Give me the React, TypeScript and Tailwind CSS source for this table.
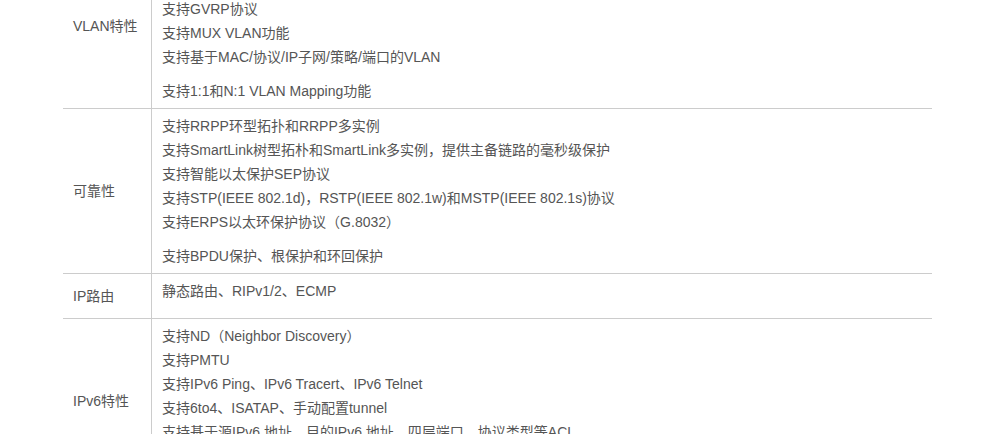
type Row = {
  label: string;
  lines: string[];
  tail?: string;
  padEnd?: boolean;
};

const rows: Row[] = [
  {
    label: "VLAN特性",
    lines: [
      "支持4K个VLAN",
      "支持Guest VLAN、Voice VLAN",
      "支持GVRP协议",
      "支持MUX VLAN功能",
      "支持基于MAC/协议/IP子网/策略/端口的VLAN",
    ],
    tail: "支持1:1和N:1 VLAN Mapping功能",
  },
  {
    label: "可靠性",
    lines: [
      "支持RRPP环型拓扑和RRPP多实例",
      "支持SmartLink树型拓朴和SmartLink多实例，提供主备链路的毫秒级保护",
      "支持智能以太保护SEP协议",
      "支持STP(IEEE 802.1d)，RSTP(IEEE 802.1w)和MSTP(IEEE 802.1s)协议",
      "支持ERPS以太环保护协议（G.8032）",
    ],
    tail: "支持BPDU保护、根保护和环回保护",
  },
  {
    label: "IP路由",
    lines: ["静态路由、RIPv1/2、ECMP"],
    padEnd: true,
  },
  {
    label: "IPv6特性",
    lines: [
      "支持ND（Neighbor Discovery）",
      "支持PMTU",
      "支持IPv6 Ping、IPv6 Tracert、IPv6 Telnet",
      "支持6to4、ISATAP、手动配置tunnel",
      "支持基于源IPv6 地址、目的IPv6 地址、四层端口、协议类型等ACL",
      "支持MLD v1/v2 snooping",
    ],
    padEnd: true,
  },
];

export default function App() {
  return (
    <div
      className="w-full h-[434px] overflow-hidden bg-white text-[14px] leading-[24px] text-[#555555] [text-spacing-trim:space-all]"
      style={{ fontFamily: '"Liberation Sans", Arial, "Noto Sans CJK SC", sans-serif' }}
    >
      <div className="ml-[63px] mt-[-56px] w-[869px]">
        {rows.map((row) => (
          <div key={row.label} className="flex border-b border-[#cccccc]">
            <div className="w-[89px] shrink-0 border-r border-[#cccccc] pl-[10px] flex items-center">
              {row.label}
            </div>
            <div className="flex-1 px-[10px] pt-[5px] pb-[5px]">
              <p className={row.padEnd ? "mb-[10px]" : ""}>
                {row.lines.map((line) => (
                  <span key={line} className="block whitespace-nowrap">
                    {line}
                  </span>
                ))}
              </p>
              {row.tail && <p className="mt-[10px] whitespace-nowrap">{row.tail}</p>}
            </div>
          </div>
        ))}
      </div>
    </div>
  );
}
